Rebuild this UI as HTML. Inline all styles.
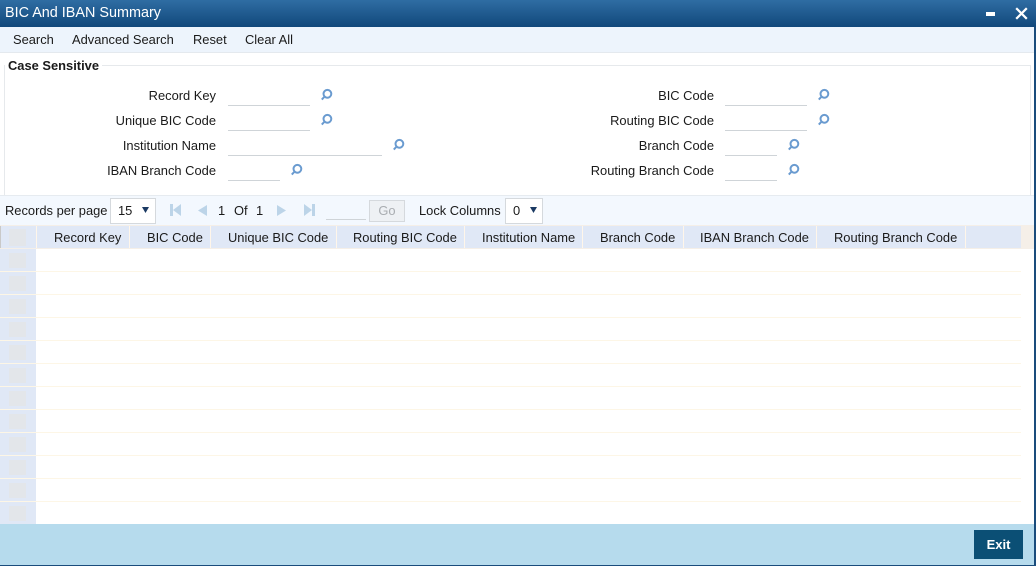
<!DOCTYPE html>
<html><head><meta charset="utf-8">
<style>
html,body{margin:0;padding:0;background:#fff}
body{width:1036px;height:566px;position:relative;overflow:hidden;font-family:"Liberation Sans",Arial,sans-serif;font-size:12.9px;color:#1a1a1a}
.a{position:absolute;white-space:nowrap;line-height:16px}
.box{position:absolute;display:block}
.r{text-align:right}
.inp{position:absolute;height:1px;background:#cfd4d8}
svg.s{position:absolute;width:14px;height:14px}
.h{position:absolute;top:230px;line-height:16px;white-space:nowrap}
</style></head><body>
<svg width="0" height="0" style="position:absolute"><defs><symbol id="m" viewBox="0 0 14 14"><circle cx="8.4" cy="5.8" r="3.9" fill="none" stroke="#6a9bd0" stroke-width="2"/><path d="M5.6 8.6L2.8 11.6" stroke="#6a9bd0" stroke-width="2" fill="none"/></symbol></defs></svg>

<div class="box" style="left:0;top:0;width:1036px;height:27px;background:linear-gradient(#2f6da3,#11487b)"></div>
<div class="a" style="left:5px;top:5px;color:#fff;font-size:14.4px">BIC And IBAN Summary</div>
<div class="box" style="left:986px;top:12px;width:9px;height:4px;background:#fff"></div>
<svg style="position:absolute;left:1015px;top:7px" width="13" height="13" viewBox="0 0 13 13"><path d="M1.2 1.2L11.8 11.8M11.8 1.2L1.2 11.8" stroke="#fff" stroke-width="2.2"/></svg>

<div class="box" style="left:0;top:27px;width:1034px;height:25px;background:#edf4fc;border-bottom:1px solid #e4e9ee"></div>
<div class="a" style="left:13px;top:32px">Search</div>
<div class="a" style="left:72px;top:32px">Advanced Search</div>
<div class="a" style="left:193px;top:32px">Reset</div>
<div class="a" style="left:245px;top:32px">Clear All</div>

<div class="box" style="left:4px;top:65px;width:1025px;height:129px;border:1px solid #e6e9ec"></div>
<div class="a" style="left:5px;top:58px;padding:0 3px;background:#fff;font-weight:bold;font-size:12.9px">Case Sensitive</div>

<div class="a r" style="right:820px;top:88px">Record Key</div>
<div class="a r" style="right:820px;top:113px">Unique BIC Code</div>
<div class="a r" style="right:820px;top:138px">Institution Name</div>
<div class="a r" style="right:820px;top:163px">IBAN Branch Code</div>
<div class="a r" style="right:322px;top:88px">BIC Code</div>
<div class="a r" style="right:322px;top:113px">Routing BIC Code</div>
<div class="a r" style="right:322px;top:138px">Branch Code</div>
<div class="a r" style="right:322px;top:163px">Routing Branch Code</div>

<div class="inp" style="left:228px;top:105px;width:82px"></div>
<div class="inp" style="left:228px;top:130px;width:82px"></div>
<div class="inp" style="left:228px;top:155px;width:154px"></div>
<div class="inp" style="left:228px;top:180px;width:52px"></div>
<div class="inp" style="left:725px;top:105px;width:82px"></div>
<div class="inp" style="left:725px;top:130px;width:82px"></div>
<div class="inp" style="left:725px;top:155px;width:52px"></div>
<div class="inp" style="left:725px;top:180px;width:52px"></div>

<svg class="s" style="left:319px;top:88px"><use href="#m"/></svg>
<svg class="s" style="left:319px;top:113px"><use href="#m"/></svg>
<svg class="s" style="left:391px;top:138px"><use href="#m"/></svg>
<svg class="s" style="left:289px;top:163px"><use href="#m"/></svg>
<svg class="s" style="left:816px;top:88px"><use href="#m"/></svg>
<svg class="s" style="left:816px;top:113px"><use href="#m"/></svg>
<svg class="s" style="left:786px;top:138px"><use href="#m"/></svg>
<svg class="s" style="left:786px;top:163px"><use href="#m"/></svg>

<div class="box" style="left:0;top:195px;width:1034px;height:31px;background:#f3f8fe;border-top:1px solid #e6ebf0;box-sizing:border-box"></div>
<div class="a" style="left:5px;top:203px">Records per page</div>
<div class="box" style="left:110px;top:198px;width:44px;height:24px;background:#fff;border:1px solid #d5d9dd"></div>
<div class="a" style="left:118px;top:203px">15</div>
<svg style="position:absolute;left:142px;top:207px" width="7" height="6"><path d="M0 0H7L3.5 6Z" fill="#1b3a63"/></svg>

<svg style="position:absolute;left:170px;top:204px" width="12" height="12" viewBox="0 0 12 12"><path d="M0 0H3V12H0ZM3 6L11 0V12Z" fill="#bcd4e8"/></svg>
<svg style="position:absolute;left:198px;top:205px" width="10" height="11" viewBox="0 0 10 11"><path d="M0 5.5L9 0V11Z" fill="#bcd4e8"/></svg>
<div class="a" style="left:218px;top:203px">1</div>
<div class="a" style="left:234px;top:203px">Of</div>
<div class="a" style="left:256px;top:203px">1</div>
<svg style="position:absolute;left:276px;top:205px" width="10" height="11" viewBox="0 0 10 11"><path d="M10 5.5L1 0V11Z" fill="#bcd4e8"/></svg>
<svg style="position:absolute;left:304px;top:204px" width="12" height="12" viewBox="0 0 12 12"><path d="M11 0H8V12H11ZM8 6L0 0V12Z" fill="#bcd4e8"/></svg>
<div class="inp" style="left:326px;top:219px;width:40px"></div>
<div class="box" style="left:369px;top:200px;width:34px;height:20px;background:#eef1f4;border:1px solid #d5d9dd"></div>
<div class="a" style="left:369px;top:203px;width:36px;text-align:center;color:#a9adb1">Go</div>
<div class="a" style="left:419px;top:203px">Lock Columns</div>
<div class="box" style="left:505px;top:198px;width:36px;height:24px;background:#fff;border:1px solid #d5d9dd"></div>
<div class="a" style="left:513px;top:203px">0</div>
<svg style="position:absolute;left:530px;top:207px" width="7" height="6"><path d="M0 0H7L3.5 6Z" fill="#1b3a63"/></svg>

<!-- grid header -->
<div class="box" style="left:0;top:225px;width:1034px;height:24px;background:#f5efe8"></div>
<div class="box" style="left:0;top:226px;width:1021px;height:22px;background:#e0e8f6"></div>
<div class="box" style="left:0;top:226px;width:1px;height:22px;background:#c9c9c9"></div>
<div class="box" style="left:36px;top:226px;width:1px;height:22px;background:#fff6ea"></div>
<div class="box" style="left:129px;top:226px;width:1px;height:22px;background:#fff6ea"></div>
<div class="box" style="left:210px;top:226px;width:1px;height:22px;background:#fff6ea"></div>
<div class="box" style="left:336px;top:226px;width:1px;height:22px;background:#fff6ea"></div>
<div class="box" style="left:464px;top:226px;width:1px;height:22px;background:#fff6ea"></div>
<div class="box" style="left:582px;top:226px;width:1px;height:22px;background:#fff6ea"></div>
<div class="box" style="left:683px;top:226px;width:1px;height:22px;background:#fff6ea"></div>
<div class="box" style="left:816px;top:226px;width:1px;height:22px;background:#fff6ea"></div>
<div class="box" style="left:965px;top:226px;width:1px;height:22px;background:#fff6ea"></div>
<div class="h" style="left:54px">Record Key</div>
<div class="h" style="left:147px">BIC Code</div>
<div class="h" style="left:228px">Unique BIC Code</div>
<div class="h" style="left:353px">Routing BIC Code</div>
<div class="h" style="left:482px">Institution Name</div>
<div class="h" style="left:600px">Branch Code</div>
<div class="h" style="left:700px">IBAN Branch Code</div>
<div class="h" style="left:834px">Routing Branch Code</div>
<div class="box" style="left:9px;top:229px;width:17px;height:17px;background:#e3e6ea"></div>

<!-- left gutter -->
<div class="box" style="left:0;top:249px;width:36px;height:275px;background:#e0e8f6"></div>
<div class="box" style="left:9px;top:253px;width:17px;height:15px;background:#e3e6ea"></div>
<div class="box" style="left:9px;top:276px;width:17px;height:15px;background:#e3e6ea"></div>
<div class="box" style="left:9px;top:299px;width:17px;height:15px;background:#e3e6ea"></div>
<div class="box" style="left:9px;top:322px;width:17px;height:15px;background:#e3e6ea"></div>
<div class="box" style="left:9px;top:345px;width:17px;height:15px;background:#e3e6ea"></div>
<div class="box" style="left:9px;top:368px;width:17px;height:15px;background:#e3e6ea"></div>
<div class="box" style="left:9px;top:391px;width:17px;height:15px;background:#e3e6ea"></div>
<div class="box" style="left:9px;top:414px;width:17px;height:15px;background:#e3e6ea"></div>
<div class="box" style="left:9px;top:437px;width:17px;height:15px;background:#e3e6ea"></div>
<div class="box" style="left:9px;top:460px;width:17px;height:15px;background:#e3e6ea"></div>
<div class="box" style="left:9px;top:483px;width:17px;height:15px;background:#e3e6ea"></div>
<div class="box" style="left:9px;top:506px;width:17px;height:15px;background:#e3e6ea"></div>

<!-- row lines -->
<div class="box" style="left:0;top:271px;width:1021px;height:1px;background:#fdf6e6"></div>
<div class="box" style="left:0;top:294px;width:1021px;height:1px;background:#fdf6e6"></div>
<div class="box" style="left:0;top:317px;width:1021px;height:1px;background:#fdf6e6"></div>
<div class="box" style="left:0;top:340px;width:1021px;height:1px;background:#fdf6e6"></div>
<div class="box" style="left:0;top:363px;width:1021px;height:1px;background:#fdf6e6"></div>
<div class="box" style="left:0;top:386px;width:1021px;height:1px;background:#fdf6e6"></div>
<div class="box" style="left:0;top:409px;width:1021px;height:1px;background:#fdf6e6"></div>
<div class="box" style="left:0;top:432px;width:1021px;height:1px;background:#fdf6e6"></div>
<div class="box" style="left:0;top:455px;width:1021px;height:1px;background:#fdf6e6"></div>
<div class="box" style="left:0;top:478px;width:1021px;height:1px;background:#fdf6e6"></div>
<div class="box" style="left:0;top:501px;width:1021px;height:1px;background:#fdf6e6"></div>

<!-- footer -->
<div class="box" style="left:0;top:524px;width:1036px;height:41px;background:#b6dbed"></div>
<div class="box" style="left:974px;top:530px;width:49px;height:29px;background:#0b4f75"></div>
<div class="a" style="left:974px;top:537px;width:49px;text-align:center;color:#fff;font-weight:bold;font-size:13px">Exit</div>

<!-- outer edge -->
<div class="box" style="left:0;top:565px;width:1036px;height:1px;background:#1a4c7c"></div>
<div class="box" style="left:1034px;top:27px;width:2px;height:539px;background:#1a4c7c"></div>
</body></html>
